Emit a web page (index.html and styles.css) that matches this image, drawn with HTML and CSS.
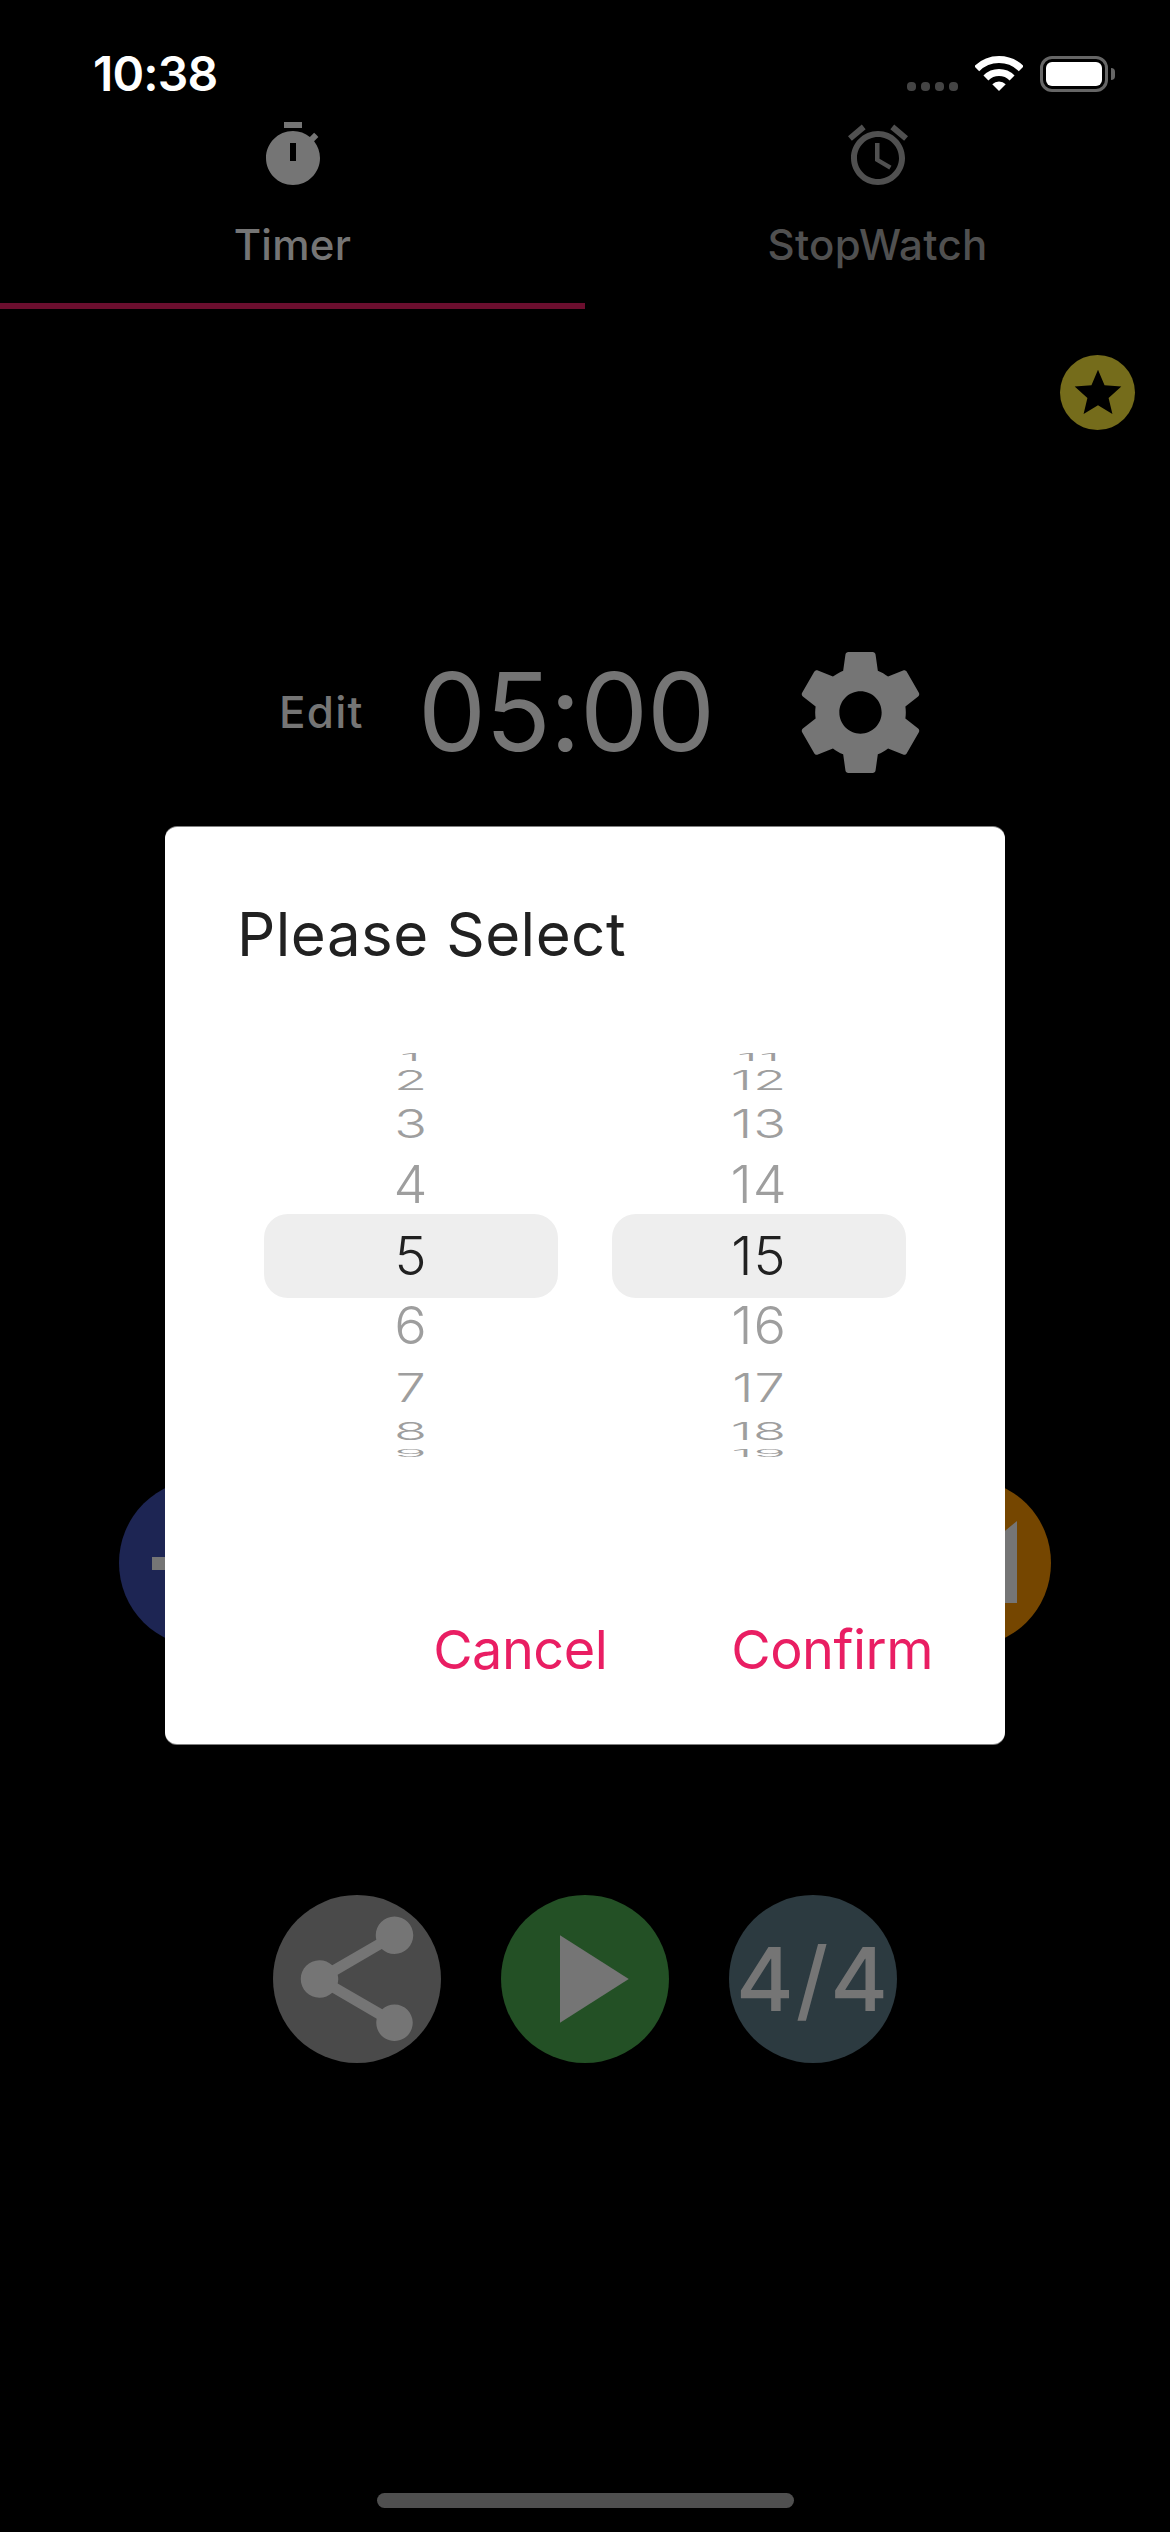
FILE: index.html
```html
<!DOCTYPE html>
<html>
<head>
    <title>Timer</title>
    <link rel="stylesheet" href="styles.css">
</head>
<body>
<div class="screen">
    <div class="status-bar">
        <span class="clock">10:38</span>
        <div class="status-icons">
            <div class="signal"><i></i><i></i><i></i><i></i></div>
            <svg class="wifi" viewBox="0 0 48 35">
                <path class="wifi-arc" d="M1.73 12.73A31.5 31.5 0 0 1 46.27 12.73"/>
                <path class="wifi-arc" d="M10.92 21.92A18.5 18.5 0 0 1 37.08 21.92"/>
                <path class="wifi-dot" d="M24 35L17.28 28.28A9.5 9.5 0 0 1 30.72 28.28Z"/>
            </svg>
            <div class="battery"><div class="battery-level"></div></div>
            <div class="battery-nub"></div>
        </div>
    </div>

    <div class="tabs">
        <div class="tab tab-active">
            <svg class="tab-icon" viewBox="0 0 24 24"><path fill-rule="evenodd" d="M15 1H9v2h6V1zm-4 13h2V8h-2v6zm8.03-6.61l1.42-1.42c-.43-.51-.9-.99-1.41-1.41l-1.42 1.42C16.07 4.74 14.12 4 12 4c-4.97 0-9 4.03-9 9s4.02 9 9 9 9-4.03 9-9c0-2.12-.74-4.07-1.97-5.61z"/></svg>
            <span class="tab-label">Timer</span>
        </div>
        <div class="tab">
            <svg class="tab-icon" viewBox="0 0 24 24"><path d="M22 5.72l-4.6-3.86-1.29 1.53 4.6 3.86L22 5.72zM7.88 3.39L6.6 1.86 2 5.71l1.29 1.53 4.59-3.85zM12.5 8H11v6l4.75 2.85.75-1.23-4-2.37V8zM12 4c-4.97 0-9 4.03-9 9s4.03 9 9 9c4.97 0 9-4.03 9-9s-4.03-9-9-9zm0 16c-3.87 0-7-3.13-7-7s3.13-7 7-7 7 3.13 7 7-3.13 7-7 7z"/></svg>
            <span class="tab-label">StopWatch</span>
        </div>
    </div>

    <div class="favorite-row">
        <div class="favorite">
            <svg viewBox="0 0 24 24"><path d="M12 17.27L18.18 21l-1.64-6.88L22 9.24l-7.19-.61L12 2 9.19 8.63 2 9.24l5.46 4.88L5.82 21z"/></svg>
        </div>
    </div>

    <div class="time-row">
        <span class="edit">Edit</span>
        <span class="time">05:00</span>
        <svg class="gear" viewBox="0 0 24 24"><path d="M19.43 12.98c.04-.32.07-.64.07-.98s-.03-.66-.07-.98l2.11-1.65c.19-.15.24-.42.12-.64l-2-3.46c-.12-.22-.39-.3-.61-.22l-2.49 1c-.52-.4-1.08-.73-1.69-.98l-.38-2.65C14.46 2.18 14.25 2 14 2h-4c-.25 0-.46.18-.49.42l-.38 2.65c-.61.25-1.17.59-1.69.98l-2.49-1c-.23-.09-.49 0-.61.22l-2 3.46c-.13.22-.07.49.12.64l2.11 1.65c-.04.32-.07.65-.07.98s.03.66.07.98l-2.11 1.65c-.19.15-.24.42-.12.64l2 3.46c.12.22.39.3.61.22l2.49-1c.52.4 1.08.73 1.69.98l.38 2.65c.03.24.24.42.49.42h4c.25 0 .46-.18.49-.42l.38-2.65c.61-.25 1.17-.59 1.69-.98l2.49 1c.23.09.49 0 .61-.22l2-3.46c.12-.22.07-.49-.12-.64l-2.11-1.65zM12 15.5c-1.93 0-3.5-1.57-3.5-3.5s1.57-3.5 3.5-3.5 3.5 1.57 3.5 3.5-1.57 3.5-3.5 3.5z"/></svg>
    </div>

    <div class="middle-row">
        <div class="round round-blue"><div class="minus"></div></div>
        <div class="round round-orange">
            <svg class="round-icon" viewBox="0 0 150 150"><path d="M25 115H125V33L25 115z"/></svg>
        </div>
    </div>

    <div class="bottom-row">
        <div class="round round-grey">
            <svg class="round-icon" viewBox="0 0 24 24"><path d="M18 16.08c-.76 0-1.44.3-1.96.77L8.91 12.7c.05-.23.09-.46.09-.7s-.04-.47-.09-.7l7.05-4.11c.54.5 1.25.81 2.04.81 1.66 0 3-1.34 3-3s-1.34-3-3-3-3 1.34-3 3c0 .24.04.47.09.7L8.04 9.81C7.5 9.31 6.79 9 6 9c-1.66 0-3 1.34-3 3s1.34 3 3 3c.79 0 1.5-.31 2.04-.81l7.12 4.16c-.05.21-.08.43-.08.65 0 1.61 1.31 2.92 2.92 2.92 1.61 0 2.92-1.31 2.92-2.92s-1.31-2.92-2.92-2.92z"/></svg>
        </div>
        <div class="round round-green">
            <svg class="round-icon" viewBox="0 0 24 24"><path d="M8 5v14l11-7z"/></svg>
        </div>
        <div class="round round-slate"><span class="beats">4/4</span></div>
    </div>

    <div class="home-bar"></div>

    <div class="dialog">
        <h2 class="dialog-title">Please Select</h2>
        <div class="picker">
            <div class="wheel">
                <div class="wheel-row r1"><span>1</span></div>
                <div class="wheel-row r2"><span>2</span></div>
                <div class="wheel-row r3"><span>3</span></div>
                <div class="wheel-row r4"><span>4</span></div>
                <div class="wheel-row selected"><span>5</span></div>
                <div class="wheel-row r6"><span>6</span></div>
                <div class="wheel-row r7"><span>7</span></div>
                <div class="wheel-row r8"><span>8</span></div>
                <div class="wheel-row r9"><span>9</span></div>
            </div>
            <div class="wheel">
                <div class="wheel-row r1"><span>11</span></div>
                <div class="wheel-row r2"><span>12</span></div>
                <div class="wheel-row r3"><span>13</span></div>
                <div class="wheel-row r4"><span>14</span></div>
                <div class="wheel-row selected"><span>15</span></div>
                <div class="wheel-row r6"><span>16</span></div>
                <div class="wheel-row r7"><span>17</span></div>
                <div class="wheel-row r8"><span>18</span></div>
                <div class="wheel-row r9"><span>19</span></div>
            </div>
        </div>
        <div class="dialog-actions">
            <span class="action">Cancel</span>
            <span class="action">Confirm</span>
        </div>
    </div>
</div>
</body>
</html>
```
FILE: styles.css
```css
* {
    box-sizing: border-box;
}

body {
    margin: 0;
    background: #000;
    font-family: Inter, "Liberation Sans", sans-serif;
}

.screen {
    position: relative;
    width: 1170px;
    height: 2532px;
    overflow: hidden;
    background: #000;
}

/* status bar */
.status-bar {
    display: flex;
    justify-content: space-between;
    height: 119px;
    padding: 48px 55px 0 93px;
}

.clock {
    color: #fff;
    font-size: 48px;
    font-weight: 600;
    line-height: 52px;
    letter-spacing: -0.8px;
}

.status-icons {
    display: flex;
    align-items: flex-start;
    padding-top: 8px;
}

.signal {
    display: flex;
    gap: 5px;
    margin-top: 26px;
    margin-right: 17px;
}

.signal i {
    width: 9px;
    height: 9px;
    border-radius: 4px;
    background: #444;
}

.wifi {
    width: 48px;
    height: 35px;
    margin-right: 17px;
}

.wifi-arc {
    fill: none;
    stroke: #fff;
    stroke-width: 7;
}

.wifi-dot {
    fill: #fff;
}

.battery {
    width: 68px;
    height: 36px;
    padding: 3px;
    border: 3px solid #666;
    border-radius: 12px;
}

.battery-level {
    width: 100%;
    height: 100%;
    border-radius: 6px;
    background: #fff;
}

.battery-nub {
    width: 4px;
    height: 12px;
    margin: 12px 0 0 3px;
    border-radius: 0 4px 4px 0;
    background: #666;
}

/* tabs */
.tabs {
    display: flex;
    height: 190px;
}

.tab {
    display: flex;
    flex: 1;
    flex-direction: column;
    align-items: center;
    color: #505050;
    fill: #505050;
}

.tab-active {
    border-bottom: 6px solid #6b0e2e;
    color: #757575;
    fill: #757575;
}

.tab-icon {
    width: 72px;
    height: 72px;
}

.tab-label {
    margin-top: 30px;
    font-size: 42px;
    font-weight: 500;
    line-height: 48px;
    letter-spacing: 0.3px;
}

/* favorite */
.favorite-row {
    display: flex;
    justify-content: flex-end;
    margin-top: 46px;
    padding-right: 35px;
}

.favorite {
    display: flex;
    align-items: center;
    justify-content: center;
    width: 75px;
    height: 75px;
    border-radius: 50%;
    background: #756c1b;
}

.favorite svg {
    width: 56px;
    height: 56px;
}

/* time */
.time-row {
    display: flex;
    align-items: center;
    margin-top: 210px;
    padding-left: 279px;
    color: #757575;
}

.edit {
    width: 139px;
    margin-bottom: 2px;
    font-size: 44px;
    font-weight: 500;
    letter-spacing: 1.2px;
}

.time {
    width: 370px;
    margin-bottom: 2px;
    font-size: 108px;
    font-weight: 400;
    letter-spacing: -1px;
}

.gear {
    width: 145px;
    height: 145px;
    fill: #757575;
}

/* round buttons */
.middle-row {
    display: flex;
    justify-content: space-between;
    margin-top: 694px;
    padding: 0 119px;
}

.bottom-row {
    display: flex;
    justify-content: center;
    gap: 60px;
    margin-top: 248px;
}

.round {
    display: flex;
    align-items: center;
    justify-content: center;
    width: 168px;
    height: 168px;
    border-radius: 50%;
}

.round-blue { background: #1d2553; }
.round-orange { background: #754600; }
.round-grey { background: #4a4a4a; }
.round-green { background: #235025; }
.round-slate { background: #2c3a40; }

.round-icon {
    flex: none;
    width: 150px;
    height: 150px;
    fill: #757575;
}

.minus {
    width: 102px;
    height: 13px;
    background: #757575;
}

.beats {
    color: #757575;
    font-size: 88px;
    font-weight: 500;
    letter-spacing: 2px;
    white-space: nowrap;
}

.home-bar {
    width: 417px;
    height: 15px;
    margin: 430px auto 0;
    border-radius: 8px;
    background: #4f4f4f;
}

/* dialog */
.dialog {
    position: absolute;
    top: 827px;
    left: 165px;
    width: 840px;
    height: 917px;
    padding: 71px 72px 0;
    border-radius: 12px;
    background: #fff;
    box-shadow: 0 -1px 0 #808080, 0 1px 0 #808080;
}

.dialog-title {
    margin: 0;
    color: #212121;
    font-size: 60px;
    font-weight: 400;
    line-height: 72px;
    letter-spacing: 0.5px;
}

.picker {
    display: flex;
    gap: 54px;
    margin-top: 76px;
    padding-left: 27px;
}

.wheel {
    width: 294px;
    color: #9e9e9e;
    font-size: 54px;
    font-weight: 350;
    line-height: 1;
    letter-spacing: 1px;
}

.wheel-row {
    display: flex;
    align-items: center;
    justify-content: center;
}

.wheel-row span {
    display: block;
}

.selected {
    height: 84px;
    border-radius: 24px;
    background: #eee;
    color: #212121;
}

.r1 { height: 23px; }
.r2 { height: 23px; }
.r3 { height: 63px; }
.r4 { height: 59px; }
.r6 { height: 56px; }
.r7 { height: 67px; }
.r8 { height: 20px; }
.r9 { height: 25px; }

.r1 span { transform: scaleY(0.18); }
.r2 span { transform: scaleY(0.49); }
.r3 span { transform: scaleY(0.74); }
.r4 span { transform: scaleY(0.95); }
.r6 span { transform: scaleY(0.97); }
.r7 span { transform: scaleY(0.74); }
.r8 span { transform: scaleY(0.46); }
.r9 span { transform: scaleY(0.18); }

.dialog-actions {
    display: flex;
    justify-content: flex-end;
    gap: 124px;
    margin-top: 152px;
    color: #e91e63;
    font-size: 54px;
    line-height: 64px;
    letter-spacing: -0.5px;
}
```
